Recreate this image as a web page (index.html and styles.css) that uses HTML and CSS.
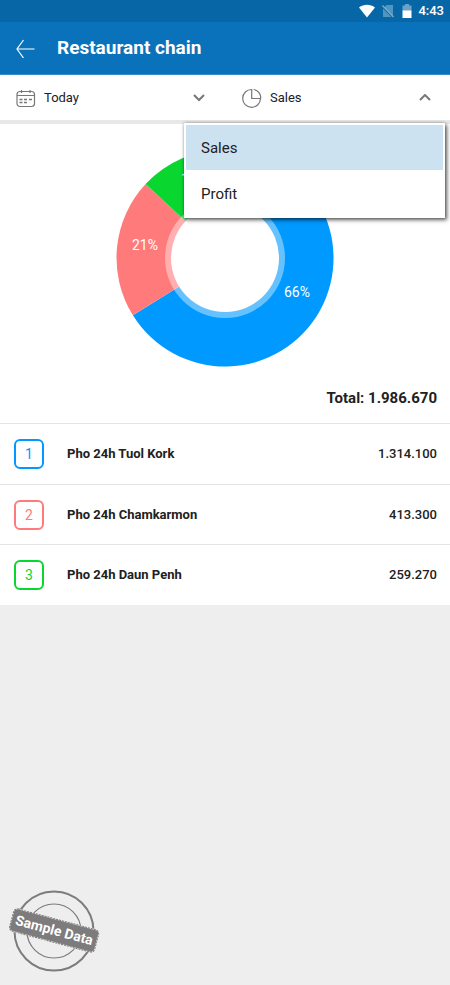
FILE: index.html
```html
<!DOCTYPE html>
<html lang="en">
<head>
<meta charset="utf-8">
<meta name="viewport" content="width=device-width, initial-scale=1">
<title>Restaurant chain</title>
<link rel="stylesheet" href="styles.css">
</head>
<body>
<div class="status">
  <svg width="18" height="14" viewBox="0 0 18 14" aria-hidden="true"><path d="M1 3.6C5.500 -.2 12.500 -.2 17 3.600L9 13.500Z" fill="#fff"/></svg>
  <svg class="status-sim" width="12" height="14" viewBox="0 0 12 14" aria-hidden="true"><path d="M4.500 1H11V11.500L2.800 3ZM1 4.500L9.500 13H1Z" fill="#fff" opacity=".3"/><path d="M.5 1.500L11.500 13" stroke="#fff" stroke-width="1.200" opacity=".5"/></svg>
  <svg class="status-battery" width="10" height="14" viewBox="0 0 10 14" aria-hidden="true"><path d="M3 0H7V1.500H9.500V7H.5V1.500H3Z" fill="#fff" opacity=".4"/><path d="M.5 6.500H9.500V14H.5Z" fill="#fff"/></svg>
  <span>4:43</span>
</div>
<header class="header">
  <button class="back" type="button" aria-label="Back">
    <svg width="20" height="20" viewBox="0 0 20 20" fill="none" stroke="#fff" stroke-width="1.200"><path d="M19.500 11H2M8.500 2L2 11L8.500 20"/></svg>
  </button>
  <h1>Restaurant chain</h1>
</header>
<nav class="filters">
  <div class="filter">
    <button class="filter-button" type="button">
      <svg width="20" height="20" viewBox="0 0 20 20" fill="none" stroke="#777" stroke-width="1.200"><rect x="1" y="3.500" width="17.500" height="15" rx="3"/><path d="M1 7.500H18.500M5.500 2V5M14 2V5"/><path d="M3.500 11.500H6.500M8 11.500H11M13 11.500H16M3.500 14.500H6.500M8 14.500H11" stroke-width="1.300"/></svg>
      <span>Today</span>
      <svg class="chevron" width="12" height="8" viewBox="0 0 12 8" fill="none" stroke="#777" stroke-width="2"><path d="M1 1L6 6L11 1"/></svg>
    </button>
  </div>
  <div class="filter">
    <button class="filter-button" type="button" aria-haspopup="listbox" aria-expanded="true">
      <svg width="20" height="20" viewBox="0 0 20 20" fill="none" stroke="#777" stroke-width="1.200"><path d="M9.700 1.500A8.900 8.900 0 1 0 18.500 10.500H9.700Z"/><path d="M11.700 1.500A8.600 8.600 0 0 1 18.600 8.500V10.500"/></svg>
      <span>Sales</span>
      <svg class="chevron" width="12" height="8" viewBox="0 0 12 8" fill="none" stroke="#777" stroke-width="2"><path d="M1 6L6 1L11 6"/></svg>
    </button>
    <div class="menu" role="listbox" aria-label="Measure">
      <button class="option selected" type="button" role="option" aria-selected="true">Sales</button>
      <button class="option" type="button" role="option" aria-selected="false">Profit</button>
    </div>
  </div>
</nav>
<main class="report">
  <svg class="chart" width="218" height="218" viewBox="-109 -109 218 218" role="img" aria-label="Share of sales by restaurant">
    <path d="M0 0V-108.500A108.500 108.500 0 1 1 -92.100 57.300Z" fill="#0099ff"/>
    <path d="M0 0L-92.100 57.300A108.500 108.500 0 0 1 -79.400 -74Z" fill="#ff7b7b"/>
    <path d="M0 0L-79.400 -74A108.500 108.500 0 0 1 0 -108.500Z" fill="#09d62f"/>
    <circle r="60" fill="#fff" opacity=".4"/>
    <circle r="54" fill="#fff"/>
    <g class="chart-labels">
      <text x="72" y="39">66%</text>
      <text x="-80" y="-8">21%</text>
      <text x="-31" y="-74">13%</text>
    </g>
  </svg>
  <p class="total">Total: 1.986.670</p>
  <table class="ranking">
    <tbody>
      <tr><td class="rank-cell"><span class="rank blue">1</span></td><th scope="row">Pho 24h Tuol Kork</th><td class="amount">1.314.100</td></tr>
      <tr><td class="rank-cell"><span class="rank red">2</span></td><th scope="row">Pho 24h Chamkarmon</th><td class="amount">413.300</td></tr>
      <tr><td class="rank-cell"><span class="rank green">3</span></td><th scope="row">Pho 24h Daun Penh</th><td class="amount">259.270</td></tr>
    </tbody>
  </table>
</main>
<footer class="footer">
  <svg width="92" height="84" viewBox="0 0 92 84" role="img" aria-label="Sample Data">
    <g fill="none" stroke="#7d7b7c"><circle cx="46" cy="42" r="39.500" stroke-width="2"/><circle cx="46" cy="42" r="27" stroke-width="1.200"/></g>
    <g transform="rotate(15 46 42)">
      <rect x="2" y="30" width="88" height="23" rx="4" fill="#7d7b7c" stroke="#eee" stroke-width="1"/>
      <rect x="2" y="30" width="88" height="23" rx="4" fill="none" stroke="#7d7b7c" stroke-width="1" stroke-dasharray="2 1"/>
      <text class="stamp-text" x="46" y="46">Sample Data</text>
    </g>
  </svg>
</footer>
</body>
</html>
```

FILE: styles.css
```css
* {
  box-sizing: border-box;
}

body {
  margin: 0;
  min-height: 100vh;
  display: flex;
  flex-direction: column;
  background: #eee;
  color: #212121;
  font: 14px/20px Roboto, sans-serif;
}

button {
  border: 0;
  padding: 0;
  background: none;
  color: inherit;
  font: inherit;
  text-align: left;
}

svg {
  display: block;
  flex: none;
}

.status {
  display: flex;
  align-items: center;
  justify-content: flex-end;
  height: 22px;
  padding-right: 6px;
  background: #0767a6;
  color: #fff;
  font-size: 13px;
  font-weight: 500;
}

.status-sim {
  margin-left: 6px;
}

.status-battery {
  margin: 0 6px 0 8px;
}

.header {
  display: flex;
  align-items: center;
  gap: 22px;
  height: 53px;
  padding: 0 15px;
  background: #0a72ba;
  border-bottom: 1px solid #3b8ec8;
  color: #fff;
}

.header h1 {
  margin: 0;
  font-size: 19px;
  font-weight: 700;
  line-height: 24px;
}

.filters {
  display: grid;
  grid-template-columns: 1fr 1fr;
  gap: 2px;
  height: 45px;
  background: #fff;
}

.filter {
  position: relative;
}

.filter-button {
  display: flex;
  align-items: center;
  gap: 8px;
  width: 100%;
  height: 100%;
  padding: 0 19px 0 16px;
  font-size: 13px;
}

.chevron {
  margin-left: auto;
}

.menu {
  position: absolute;
  z-index: 1;
  top: 48px;
  right: 5px;
  display: grid;
  gap: 1px;
  width: 261px;
  padding: 2px;
  background: #fff;
  box-shadow: 2px 2px 4px rgba(0, 0, 0, 0.6), 0 0 3px rgba(0, 0, 0, 0.3);
}

.option {
  height: 45px;
  padding: 0 15px;
  font-size: 15px;
}

.option.selected {
  background: #cde2f1;
}

.report {
  border-top: 4px solid #e8e8e8;
  background: #fff;
}

.chart {
  margin: 25px auto 0;
}

.chart-labels {
  fill: #fff;
  font-size: 14px;
  text-anchor: middle;
}

.total {
  margin: 21px 13px 15px;
  font-size: 15px;
  font-weight: 700;
  text-align: right;
}

.ranking {
  width: 100%;
  border-collapse: collapse;
}

.ranking tr {
  height: 61px;
  border-top: 1px solid #e4e4e4;
}

.ranking tr + tr {
  height: 60px;
}

.ranking td,
.ranking th {
  padding: 0;
}

.ranking th {
  font-size: 13px;
  font-weight: 700;
  text-align: left;
}

.ranking .rank-cell {
  width: 67px;
  padding-left: 14px;
}

.ranking .amount {
  padding-right: 13px;
  font-size: 13px;
  font-weight: 500;
  text-align: right;
}

.rank {
  display: grid;
  place-items: center;
  width: 30px;
  height: 30px;
  border: 2px solid;
  border-radius: 6px;
}

.blue {
  color: #0099ff;
}

.red {
  color: #ff7b7b;
}

.green {
  color: #09d62f;
}

.footer {
  margin-top: auto;
  padding: 0 8px 12px;
}

.stamp-text {
  fill: #fff;
  font-size: 14px;
  font-weight: 700;
  text-anchor: middle;
}
```
